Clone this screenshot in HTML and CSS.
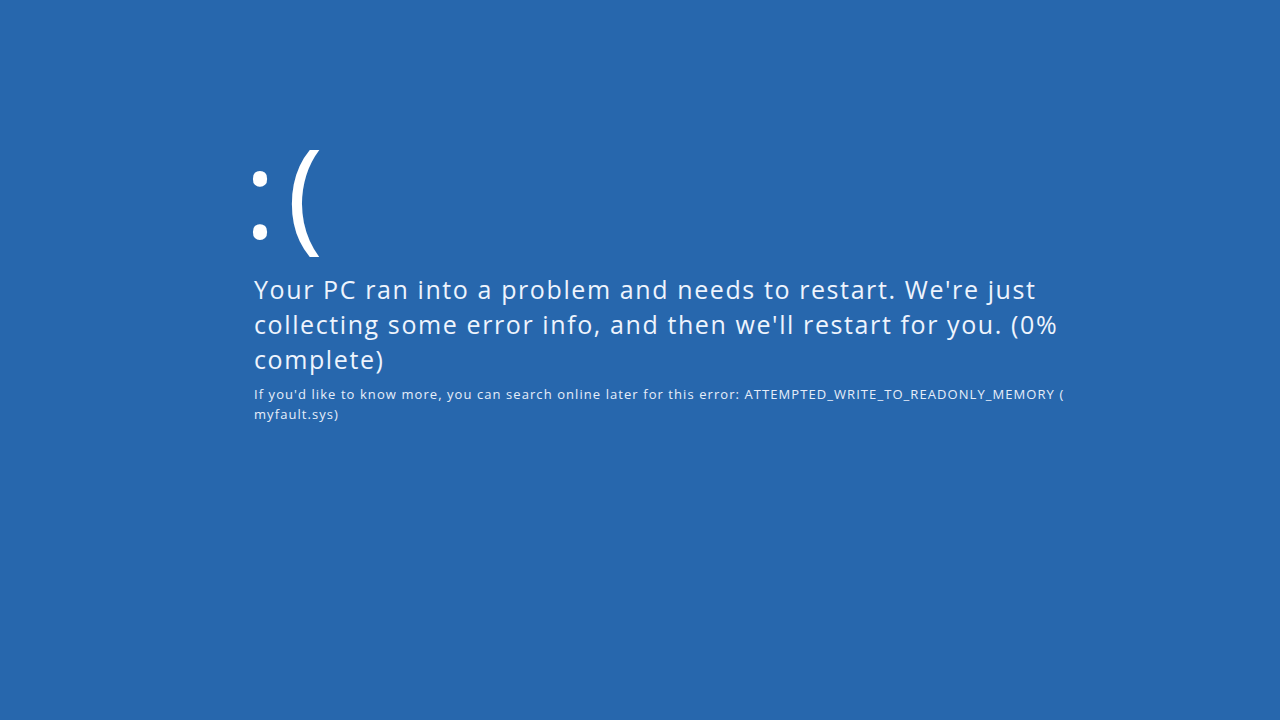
FILE: index.html
```html
<!DOCTYPE html>
<html lang="en">
<head>
<meta charset="utf-8">
<title>Blue screen</title>
<link rel="stylesheet" href="styles.css">
</head>
<body>
<main class="screen">
  <div class="face">:(</div>
  <p class="message">Your PC ran into a problem and needs to restart. We're just collecting some error info, and then we'll restart for you. (0% complete)</p>
  <p class="detail">If you'd like to know more, you can search online later for this error: ATTEMPTED_WRITE_TO_READONLY_MEMORY ( myfault.sys)</p>
</main>
</body>
</html>
```
FILE: styles.css
```css
html, body {
  margin: 0;
  padding: 0;
  height: 100%;
  background: #2767ad;
}
.screen {
  box-sizing: border-box;
  height: 720px;
  padding: 116px 0 0 250px;
  display: flex;
  flex-direction: column;
  color: #ffffff;
  font-family: "Open Sans", "Noto Sans", sans-serif;
}
.face {
  margin: 0 0 2px -6px;
  font-size: 122px;
  line-height: 150px;
  font-weight: 400;
  letter-spacing: 11px;
}
.message {
  margin: 4px 0 0 4px;
  width: 830px;
  font-size: 25px;
  line-height: 35px;
  font-weight: 400;
  letter-spacing: 1.6px;
  color: #eef4fd;
}
.detail {
  margin: 7px 0 0 4px;
  width: 830px;
  font-size: 13px;
  line-height: 20px;
  letter-spacing: 1.07px;
  color: #e6eefa;
}
```
